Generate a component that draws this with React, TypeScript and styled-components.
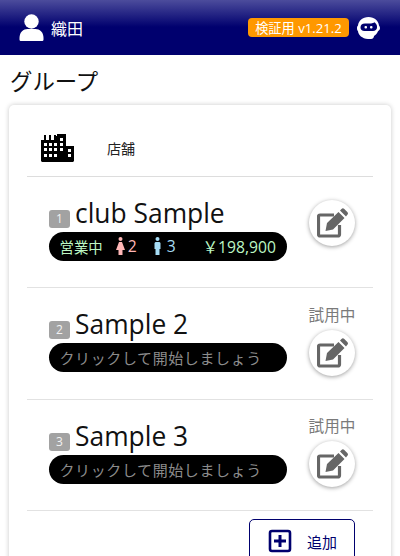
import styled, { createGlobalStyle } from "styled-components";

const GlobalStyle = createGlobalStyle`
  html, body {
    margin: 0;
    padding: 0;
    background: #fff;
    overflow: hidden;
    font-family: "Open Sans", "Noto Sans CJK JP", sans-serif;
  }
`;

const Page = styled.div`
  width: 400px;
  height: 556px;
  overflow: hidden;
`;

const Header = styled.header`
  height: 55px;
  box-sizing: border-box;
  display: flex;
  align-items: center;
  padding: 0 20px 0 19px;
  color: #fff;
  background: linear-gradient(#4c4c9c 0, #00006e 27px, #00006e 100%);
`;

const UserName = styled.span`
  margin-left: 7px;
  font-size: 16px;
  flex: 1;
`;

const Version = styled.span`
  background: #ff9800;
  border-radius: 4px;
  height: 19px;
  width: 101px;
  display: flex;
  align-items: center;
  justify-content: center;
  font-size: 13.2px;
  white-space: nowrap;
`;

const BotIcon = styled.svg`
  margin-left: 8px;
`;

const Title = styled.h1`
  margin: 0;
  padding: 13px 0 0 10px;
  height: 50px;
  box-sizing: border-box;
  font-size: 22.4px;
  line-height: 28px;
  font-weight: 400;
  color: #111;
`;

const Card = styled.section`
  margin: 0 9px;
  padding: 0 18px;
  height: 480px;
  background: #fff;
  border-radius: 5px;
  box-shadow: 0 0 5px rgba(0, 0, 0, 0.22);
`;

const CardHead = styled.div`
  height: 71.5px;
  box-sizing: border-box;
  display: flex;
  align-items: center;
  padding: 16px 0 0 14px;
  border-bottom: 1px solid #ddd;
  font-size: 14px;
  color: #222;
`;

const HeadLabel = styled.span`
  margin-left: 32px;
`;

const Row = styled.div`
  height: 111.5px;
  box-sizing: border-box;
  border-bottom: 1px solid #e2e2e2;
  display: flex;
  padding-left: 22px;
`;

const RowMain = styled.div`
  width: 238px;
  padding-top: 17px;
`;

const NameLine = styled.div`
  display: flex;
  align-items: flex-end;
  height: 37px;
`;

const Index = styled.span`
  width: 21px;
  height: 18px;
  margin: 0 5px 3px 0;
  background: #a2a2a2;
  color: #f2f2f2;
  border-radius: 3px;
  font-size: 12px;
  line-height: 18px;
  text-align: center;
`;

const Name = styled.span`
  font-size: 26.4px;
  line-height: 36px;
  color: #111;
`;

const Pill = styled.div`
  height: 29px;
  margin-top: 1px;
  padding: 0 11px 0 10.5px;
  border-radius: 15px;
  background: #000;
  display: flex;
  align-items: center;
  font-size: 15.7px;
  white-space: nowrap;
`;

const Open = styled.span`
  font-size: 14.4px;
  color: #bdf7c4;
  margin-right: 13px;
`;

const Count = styled.span<{ $color: string; $gap: number; $after: number }>`
  display: flex;
  align-items: center;
  gap: ${(p) => p.$gap}px;
  margin-right: ${(p) => p.$after}px;
  color: ${(p) => p.$color};
`;

const Sales = styled.span`
  margin-left: auto;
  color: #bdf7c4;
`;

const Hint = styled.span`
  color: #8c8c8c;
  font-size: 15px;
  letter-spacing: 0.6px;
`;

const Side = styled.div`
  width: 46px;
  margin-left: 22px;
  display: flex;
  flex-direction: column;
  align-items: center;
  justify-content: flex-end;
`;

const Trial = styled.span`
  font-size: 15.6px;
  line-height: 20px;
  color: #7a7a7a;
  white-space: nowrap;
  margin-bottom: 5px;
`;

const EditButton = styled.button<{ $low: boolean }>`
  width: 46px;
  height: 46px;
  padding: 0;
  border: none;
  border-radius: 50%;
  background: #fff;
  box-shadow: 0 1px 4px rgba(0, 0, 0, 0.38);
  display: flex;
  align-items: center;
  justify-content: center;
  margin-bottom: ${(p) => (p.$low ? 23 : 41)}px;
`;

const Footer = styled.div`
  display: flex;
  justify-content: flex-end;
  padding: 8px 18px 0 0;
`;

const AddButton = styled.button`
  width: 106px;
  height: 44px;
  box-sizing: border-box;
  background: #fff;
  border: 1px solid #00006e;
  border-radius: 5px;
  color: #00006e;
  font-family: inherit;
  font-size: 15px;
  display: flex;
  align-items: center;
  padding: 0 0 0 18px;
  gap: 15px;
`;

const UserIcon = () => (
  <svg width="25" height="28" viewBox="0 0 25 28" fill="#fff">
    <circle cx="12.5" cy="7.5" r="7.2" />
    <path d="M0.5 24c0-6 4-9 8-9h8c4 0 8 3 8 9v1.5c0 1-.8 1.5-1.5 1.5h-21C1.300 27 .5 26.5 .5 25.5z" />
  </svg>
);

const Bot = () => (
  <BotIcon width="23" height="22" viewBox="0 0 23 22">
    <path
      fill="#fff"
      d="M11.5 0C17.5 0 21.5 4 22 8.5c.7.7 1 1.500 1 2.500 0 1.500-.8 2.500-2 3.200-1 2-2 3.500-4 4.800 0 1.500-1 3-3 3h-3C5 21.500 1.500 18 1 14.200 .3 13.500 0 12.500 0 11c0-1 .4-2 1-2.500C1.500 4 5.500 0 11.500 0z"
    />
    <path
      fill="#00006e"
      d="M8 6.500h6c1.500 0 2.500-.5 3.500-1.200C19 6.500 20 8 20 9.500v1c0 2-1.800 3.500-4 3.500H7.500C5 14 3.500 12.500 3.500 10.500 3.500 8 5 6.500 8 6.500z"
    />
    <rect x="7.500" y="9" width="2.500" height="2.500" rx="1" fill="#fff" />
    <rect x="13" y="9" width="2.500" height="2.500" rx="1" fill="#fff" />
  </BotIcon>
);

const BuildingIcon = () => (
  <svg width="34" height="28" viewBox="0 0 34 28">
    <path
      fill="#000"
      d="M0 6h3V1h2v5h3V1h2v5h3V1h2v1h1V0h9v12h8v15l-1 1H1l-1-1z"
    />
    <g fill="#fff">
      {[3, 8, 13].map((x) =>
        [9, 14, 20].map((y) => <rect key={`${x}-${y}`} x={x} y={y} width="3" height="3" />)
      )}
      <rect x="19" y="4" width="3" height="3" />
      <rect x="19" y="9" width="3" height="3" />
      <rect x="19" y="14" width="3" height="3" />
      <rect x="27" y="15" width="3" height="3" />
      <rect x="27" y="20" width="3" height="3" />
    </g>
  </svg>
);

const Woman = ({ color }: { color: string }) => (
  <svg width="9" height="18" viewBox="0 0 9 18" fill={color}>
    <circle cx="4.5" cy="2" r="2" />
    <path d="M3 5h3l3 8H6.500v5h-4v-5H0z" />
  </svg>
);

const Man = ({ color }: { color: string }) => (
  <svg width="9" height="18" viewBox="0 0 9 18" fill={color}>
    <circle cx="4.5" cy="2" r="2" />
    <path d="M2.5 5h4l1 1v6H6.500v6h-4v-6H1.500V6z" />
  </svg>
);

const EditIcon = () => (
  <svg width="31" height="30" viewBox="0 0 31 30">
    <path
      fill="none"
      stroke="#666"
      strokeWidth="3.2"
      d="M17 7H3a1.500 1.500 0 0 0-1.500 1.500v18a1.500 1.500 0 0 0 1.500 1.500H21a1.500 1.500 0 0 0 1.500-1.500V17"
    />
    <path
      fill="#666"
      d="M10 15 21.5 4l6 6L16 21.500l-7.500 1.500zM23 2.500 24.500 1a2 2 0 0 1 2.800 0l3 3a2 2 0 0 1 0 2.800L29 8.500z"
    />
  </svg>
);

const PlusIcon = () => (
  <svg width="24" height="24" viewBox="0 0 24 24">
    <rect x="2" y="2" width="20" height="20" rx="2" fill="none" stroke="#00006e" strokeWidth="2.6" />
    <path d="M12 6v12M6 12h12" stroke="#00006e" strokeWidth="3" />
  </svg>
);

const groups = [
  { id: 1, name: "club Sample", active: true, trial: false },
  { id: 2, name: "Sample 2", active: false, trial: true },
  { id: 3, name: "Sample 3", active: false, trial: true },
];

const App = () => (
  <Page>
    <GlobalStyle />
    <Header>
      <UserIcon />
      <UserName>織田</UserName>
      <Version>検証用 v1.21.2</Version>
      <Bot />
    </Header>
    <Title>グループ</Title>
    <Card>
      <CardHead>
        <BuildingIcon />
        <HeadLabel>店舗</HeadLabel>
      </CardHead>
      {groups.map((g) => (
        <Row key={g.id}>
          <RowMain>
            <NameLine>
              <Index>{g.id}</Index>
              <Name>{g.name}</Name>
            </NameLine>
            <Pill>
              {g.active ? (
                <>
                  <Open>営業中</Open>
                  <Count $color="#ffb7b7" $gap={3} $after={16}>
                    <Woman color="#ffb7b7" />2
                  </Count>
                  <Count $color="#a6dcf5" $gap={5} $after={13}>
                    <Man color="#a6dcf5" />3
                  </Count>
                  <Sales>￥198,900</Sales>
                </>
              ) : (
                <Hint>クリックして開始しましょう</Hint>
              )}
            </Pill>
          </RowMain>
          <Side>
            {g.trial && <Trial>試用中</Trial>}
            <EditButton $low={g.trial} aria-label="edit">
              <EditIcon />
            </EditButton>
          </Side>
        </Row>
      ))}
      <Footer>
        <AddButton>
          <PlusIcon />
          追加
        </AddButton>
      </Footer>
    </Card>
  </Page>
);

export default App;
